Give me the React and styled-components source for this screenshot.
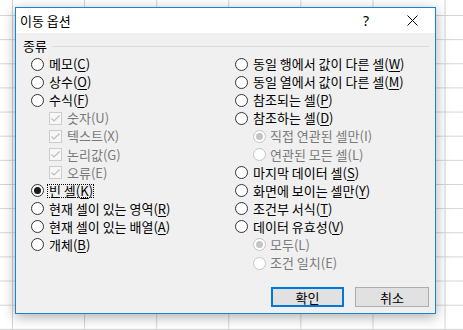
import React from 'react';
import styled, { createGlobalStyle } from 'styled-components';

const GlobalStyle = createGlobalStyle`
  html, body { margin: 0; padding: 0; width: 463px; height: 330px; overflow: hidden; }
  body {
    background-color: #ffffff;
    background-image:
      linear-gradient(to right, #d4d4d4 1px, transparent 1px),
      linear-gradient(to bottom, #d4d4d4 1px, transparent 1px);
    background-size: 72.1px 100%, 100% 24.15px;
    background-position: 12px 0, 0 15px;
    font-family: "Noto Sans CJK KR", "Noto Sans", sans-serif;
  }
`;

const Page = styled.div`
  padding: 7px 0 0 15px;
`;

const Dialog = styled.div`
  width: 421px;
  box-sizing: border-box;
  border: 1px solid #1883d7;
  background: #f0f0f0;
  box-shadow: 0 3px 12px rgba(0, 0, 0, 0.32);
  display: flex;
  flex-direction: column;
`;

const TitleBar = styled.div`
  height: 25px;
  background: #ffffff;
  display: flex;
  align-items: center;
`;

const Title = styled.div`
  flex: 1;
  padding-left: 4px;
  font-size: 13px;
  color: #000;
`;

const TitleButton = styled.div`
  width: 46px;
  height: 25px;
  display: flex;
  align-items: center;
  justify-content: center;
  font-family: "Noto Sans", sans-serif;
  font-size: 14px;
  color: #000;
`;

const Body = styled.div`
  padding: 4px 6px 6px 7px;
  display: flex;
  flex-direction: column;
`;

const GroupHeader = styled.div`
  height: 16px;
  display: flex;
  align-items: center;
  gap: 5px;
  font-size: 13px;
  color: #000;
`;

const GroupLine = styled.div`
  flex: 1;
  height: 1px;
  background: #dcdcdc;
  margin-top: 2px;
`;

const Options = styled.div`
  display: grid;
  grid-template-columns: 204px 1fr;
  padding-left: 8px;
  margin-top: 2px;
`;

const Column = styled.div`
  display: flex;
  flex-direction: column;
`;

const Row = styled.div`
  height: 18.1px;
  display: flex;
  align-items: center;
  padding-left: ${p => (p.$sub ? 18 : 0)}px;
`;

const RadioMark = styled.span`
  width: 13px;
  height: 13px;
  box-sizing: border-box;
  border-radius: 50%;
  border: 1px solid ${p => (p.$disabled ? '#c4c4c4' : '#333333')};
  background: #ffffff;
  display: flex;
  align-items: center;
  justify-content: center;
  margin-right: ${p => (p.$disabled ? 4 : 5)}px;
  flex: none;
  &::after {
    content: '';
    display: ${p => (p.$checked ? 'block' : 'none')};
    width: 7px;
    height: 7px;
    border-radius: 50%;
    background: ${p => (p.$disabled ? '#c4c4c4' : '#1a1a1a')};
  }
`;

const CheckMark = styled.span`
  width: 13px;
  height: 13px;
  box-sizing: border-box;
  border: 1px solid #cccccc;
  background: #f7f7f7;
  display: flex;
  align-items: center;
  justify-content: center;
  margin-right: 5px;
  flex: none;
`;

const Label = styled.span`
  position: relative;
  display: inline-block;
  font-size: 13px;
  line-height: 12px;
  white-space: nowrap;
  color: ${p => (p.$disabled ? '#7a7a7a' : '#000000')};
  &::after {
    content: '';
    display: ${p => (p.$focus ? 'block' : 'none')};
    position: absolute;
    inset: -1px -1px -1px -2px;
    border: 1px dotted #000;
  }
  u { text-decoration-thickness: 1px; text-underline-offset: 2px; }
`;

const Footer = styled.div`
  display: flex;
  justify-content: flex-end;
  gap: 11px;
  margin-top: 15px;
`;

const Button = styled.div`
  width: ${p => p.$w}px;
  height: 20px;
  box-sizing: border-box;
  background: #e1e1e1;
  border: ${p => (p.$default ? '2px solid #0078d7' : '1px solid #adadad')};
  display: flex;
  align-items: center;
  justify-content: center;
  font-size: 13px;
  color: #000;
`;

const Check = () => (
  <svg width="11" height="11" viewBox="0 0 11 11">
    <polyline points="1.5,5.5 4,8 9.5,2.5" fill="none" stroke="#bdbdbd" strokeWidth="1.2" />
  </svg>
);

const Text = ({ text, m, disabled, focus }) => (
  <Label $disabled={disabled} $focus={focus}>
    {text}({m && !disabled ? <u>{m}</u> : m})
  </Label>
);

const Radio = ({ text, m, checked, disabled, sub, focus }) => (
  <Row $sub={sub}>
    <RadioMark $checked={checked} $disabled={disabled} />
    <Text text={text} m={m} disabled={disabled} focus={focus} />
  </Row>
);

const CheckRow = ({ text, m }) => (
  <Row $sub>
    <CheckMark><Check /></CheckMark>
    <Text text={text} m={m} disabled />
  </Row>
);

export default function App() {
  return (
    <>
      <GlobalStyle />
      <Page>
        <Dialog>
          <TitleBar>
            <Title>이동 옵션</Title>
            <TitleButton>?</TitleButton>
            <TitleButton>
              <svg width="11" height="11" viewBox="0 0 11 11">
                <path d="M0.5 0.5 L10.5 10.5 M10.5 0.5 L0.5 10.5" stroke="#000" strokeWidth="1" fill="none" />
              </svg>
            </TitleButton>
          </TitleBar>
          <Body>
            <GroupHeader>
              <span>종류</span>
              <GroupLine />
            </GroupHeader>
            <Options>
              <Column>
                <Radio text="메모" m="C" />
                <Radio text="상수" m="O" />
                <Radio text="수식" m="F" />
                <CheckRow text="숫자" m="U" />
                <CheckRow text="텍스트" m="X" />
                <CheckRow text="논리값" m="G" />
                <CheckRow text="오류" m="E" />
                <Radio text="빈 셀" m="K" checked focus />
                <Radio text="현재 셀이 있는 영역" m="R" />
                <Radio text="현재 셀이 있는 배열" m="A" />
                <Radio text="개체" m="B" />
              </Column>
              <Column>
                <Radio text="동일 행에서 값이 다른 셀" m="W" />
                <Radio text="동일 열에서 값이 다른 셀" m="M" />
                <Radio text="참조되는 셀" m="P" />
                <Radio text="참조하는 셀" m="D" />
                <Radio text="직접 연관된 셀만" m="I" sub disabled checked />
                <Radio text="연관된 모든 셀" m="L" sub disabled />
                <Radio text="마지막 데이터 셀" m="S" />
                <Radio text="화면에 보이는 셀만" m="Y" />
                <Radio text="조건부 서식" m="T" />
                <Radio text="데이터 유효성" m="V" />
                <Radio text="모두" m="L" sub disabled checked />
                <Radio text="조건 일치" m="E" sub disabled />
              </Column>
            </Options>
            <Footer>
              <Button $w={73} $default>확인</Button>
              <Button $w={74}>취소</Button>
            </Footer>
          </Body>
        </Dialog>
      </Page>
    </>
  );
}
